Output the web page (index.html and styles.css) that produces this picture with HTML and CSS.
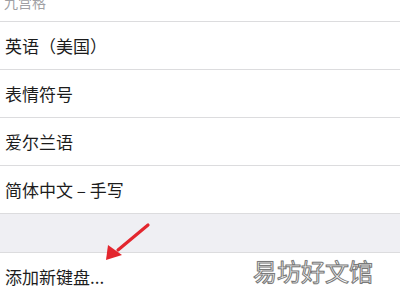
FILE: index.html
```html
<!DOCTYPE html>
<html lang="zh">
<head>
<meta charset="utf-8">
<link rel="stylesheet" href="styles.css">
</head>
<body>
<div class="page">
  <div class="hdr">九宫格</div>
  <div class="list">
    <div class="row">英语（美国）</div>
    <div class="row">表情符号</div>
    <div class="row">爱尔兰语</div>
    <div class="row">简体中文 – 手写</div>
  </div>
  <div class="band"></div>
  <div class="row add">添加新键盘...</div>
  <svg class="arrow" width="60" height="50" viewBox="0 0 60 50">
    <path d="M48 5 L18 30" stroke="#e3262e" stroke-width="3.2" stroke-linecap="round" fill="none"/>
    <path d="M6 40 L8 25 L22 35 Z" fill="#e3262e"/>
  </svg>
  <div class="wm">易坊好文馆</div>
</div>
</body>
</html>
```
FILE: styles.css
```css
html, body {
  margin: 0;
  padding: 0;
  background: #ffffff;
}
.page {
  position: relative;
  width: 400px;
  height: 300px;
  overflow: hidden;
  font-family: "Noto Sans CJK SC", "Noto Sans", sans-serif;
  color: #1c1c1c;
}
.hdr {
  height: 21px;
  line-height: 4px;
  font-size: 14px;
  color: #a0a0a4;
  padding-left: 4px;
}
.row {
  height: 47px;
  border-top: 1px solid #dcdcde;
  display: flex;
  align-items: center;
  padding-left: 5px;
  font-size: 17px;
  background: #ffffff;
}
.band {
  height: 38px;
  border-top: 1px solid #dcdcde;
  background: #efeff3;
}
.add {
  height: 47px;
}
.arrow {
  position: absolute;
  left: 100px;
  top: 220px;
}
.wm {
  position: absolute;
  left: 253px;
  top: 253px;
  font-size: 24px;
  color: #ffffff;
  -webkit-text-stroke: 1px #7a7a7a;
  text-shadow: 0 0 1px #999;
}
```
